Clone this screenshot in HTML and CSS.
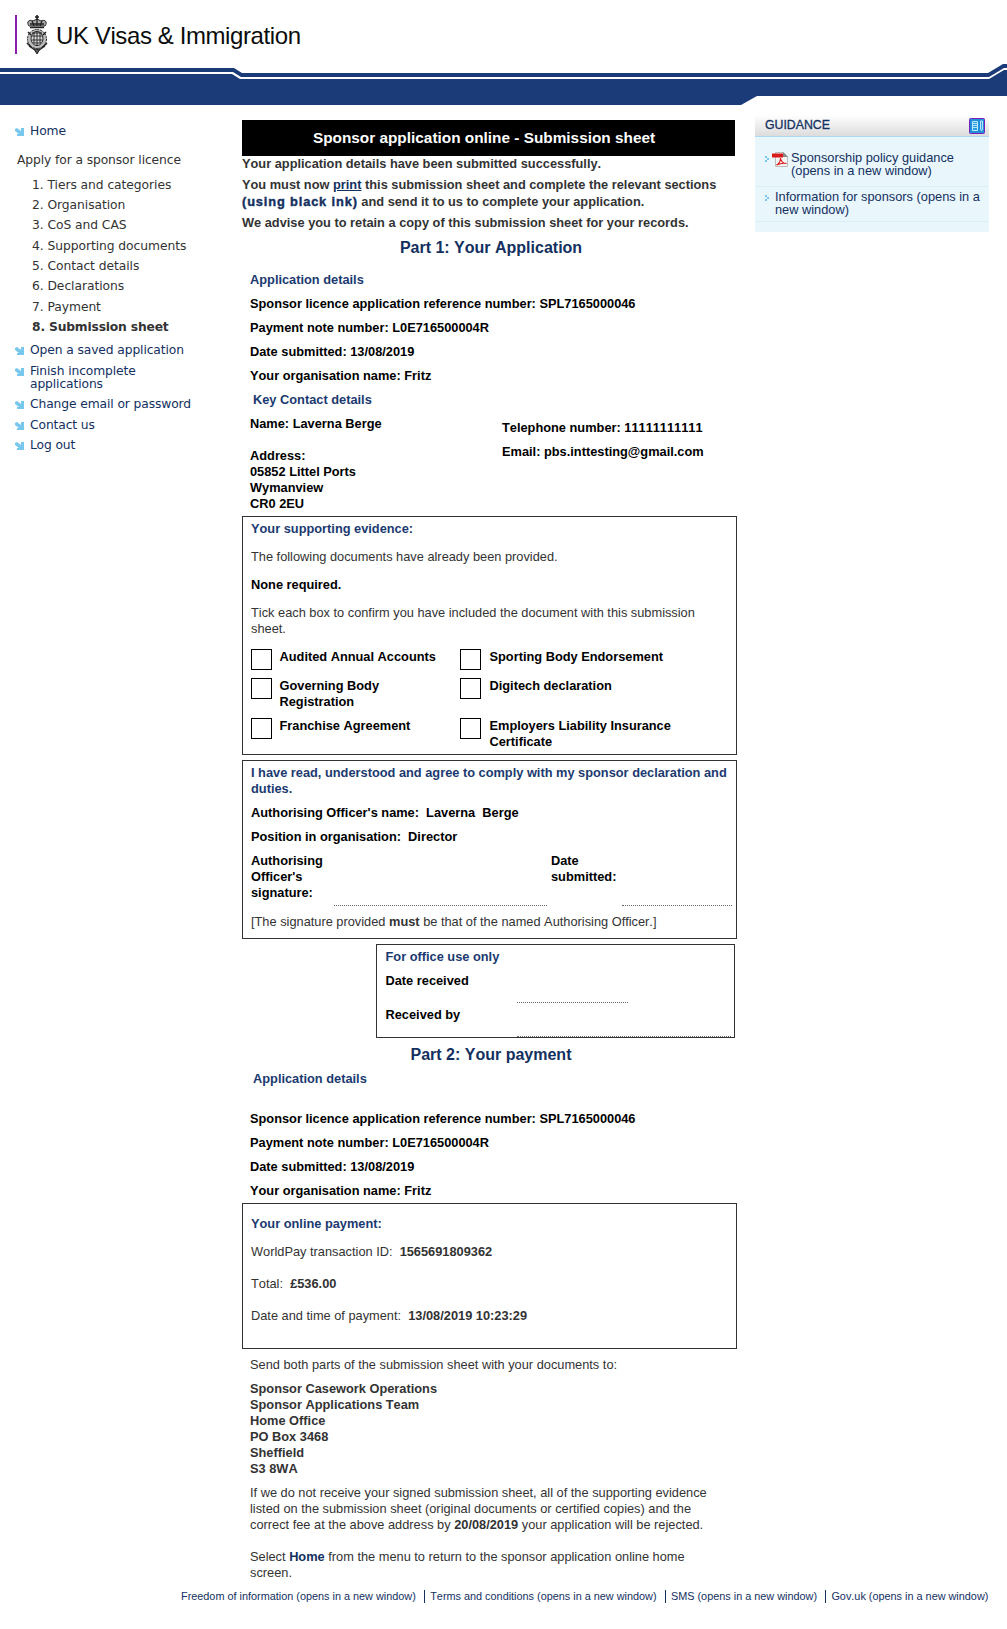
FILE: index.html
```html
<!DOCTYPE html>
<html lang="en">
<head>
<meta charset="utf-8">
<title>Sponsor application online - Submission sheet</title>
<link rel="stylesheet" href="styles.css">
</head>
<body>
<header class="masthead">
  <div class="brand">
    <span class="brand-rule"></span>
    <svg class="crest" width="22" height="40" viewBox="0 0 22 40" aria-hidden="true">
      <g fill="none" stroke="#222" stroke-width="1">
        <path d="M11 0v5M9 2h4" stroke-width="1.6"/>
        <path d="M3 11C0 7 3 4 7 6l4-2 4 2c4-2 7 1 4 5z" fill="#aaa"/>
        <path d="M4 9h14M6 6l2 5M16 6l-2 5M11 4v7M4 12.5h14" stroke-width="1.3"/>
        <ellipse cx="11" cy="24" rx="9.5" ry="9.5" fill="#bbb" stroke-dasharray="2 .8"/>
        <ellipse cx="11" cy="23.500" rx="6" ry="7" fill="#ddd"/>
        <path d="M6 18h10M6 21h10M6 25h10M7 28h8M11 16v15M8 17v11M14 17v11" stroke-width=".9"/>
        <path d="M2 17l3 3M20 17l-3 3M1 28l5 5M21 28l-5 5M3 31l6 4M19 31l-6 4" stroke-width="1.500"/>
        <path d="M8 34l3 5 3-5z" fill="#555"/>
      </g>
    </svg>
    <span class="brand-name">UK Visas &amp; Immigration</span>
  </div>
  <svg class="ribbon" width="1007" height="42" viewBox="0 0 1007 42" aria-hidden="true">
    <path fill="#1b3a78" d="M0 4H234L242 9H988L1003 0H1007V4H1004L989 13H241L233 8H0Z"/>
    <path fill="#1b3a78" d="M0 10H232L240 15H989L1004 6H1007V32H757L741 41H0Z"/>
  </svg>
</header>
<div class="page">
  <nav class="menu">
    <ul class="links"><li><svg class="arrow" viewBox="0 0 9 8"><path d="M0 1L2 0 6 3V0H9V8H2V6H4L0 3Z"/></svg><a>Home</a></li></ul>
    <p class="menu-title">Apply for a sponsor licence</p>
    <ol class="steps">
      <li>1. Tiers and categories</li>
      <li>2. Organisation</li>
      <li>3. CoS and CAS</li>
      <li>4. Supporting documents</li>
      <li>5. Contact details</li>
      <li>6. Declarations</li>
      <li>7. Payment</li>
      <li class="current">8. Submission sheet</li>
    </ol>
    <ul class="links">
      <li><svg class="arrow" viewBox="0 0 9 8"><path d="M0 1L2 0 6 3V0H9V8H2V6H4L0 3Z"/></svg><a>Open a saved application</a></li>
      <li><svg class="arrow" viewBox="0 0 9 8"><path d="M0 1L2 0 6 3V0H9V8H2V6H4L0 3Z"/></svg><a>Finish incomplete<br>applications</a></li>
      <li><svg class="arrow" viewBox="0 0 9 8"><path d="M0 1L2 0 6 3V0H9V8H2V6H4L0 3Z"/></svg><a>Change email or password</a></li>
      <li><svg class="arrow" viewBox="0 0 9 8"><path d="M0 1L2 0 6 3V0H9V8H2V6H4L0 3Z"/></svg><a>Contact us</a></li>
      <li><svg class="arrow" viewBox="0 0 9 8"><path d="M0 1L2 0 6 3V0H9V8H2V6H4L0 3Z"/></svg><a>Log out</a></li>
    </ul>
  </nav>

  <main class="sheet">
    <h1 class="sheet-title">Sponsor application online - Submission sheet</h1>
    <div class="intro">
      <p>Your application details have been submitted successfully.</p>
      <p class="instructions">You must now <a class="print">print</a> this submission sheet and complete the relevant sections<br><span class="ink">(using black ink)</span> and send it to us to complete your application.</p>
      <p>We advise you to retain a copy of this submission sheet for your records.</p>
    </div>
    <h2 class="part">Part 1: Your Application</h2>
    <section class="details">
      <h3 class="details-first">Application details</h3>
      <p>Sponsor licence application reference number: SPL7165000046</p>
      <p>Payment note number: L0E716500004R</p>
      <p>Date submitted: 13/08/2019</p>
      <p>Your organisation name: Fritz</p>
      <h3 class="indent">Key Contact details</h3>
      <div class="contact">
        <div class="contact-person">
          <p>Name: Laverna Berge</p>
          <p class="address">Address:<br>05852 Littel Ports<br>Wymanview<br>CR0 2EU</p>
        </div>
        <div class="contact-reach">
          <p>Telephone number: 11111111111</p>
          <p>Email: pbs.inttesting@gmail.com</p>
        </div>
      </div>
    </section>

    <section class="box evidence">
      <h3>Your supporting evidence:</h3>
      <p>The following documents have already been provided.</p>
      <p class="strong">None required.</p>
      <p>Tick each box to confirm you have included the document with this submission<br>sheet.</p>
      <div class="ticks">
        <span class="tick"></span><span>Audited Annual Accounts</span>
        <span class="tick"></span><span>Sporting Body Endorsement</span>
        <span class="tick"></span><span>Governing Body<br>Registration</span>
        <span class="tick"></span><span>Digitech declaration</span>
        <span class="tick"></span><span>Franchise Agreement</span>
        <span class="tick"></span><span>Employers Liability Insurance<br>Certificate</span>
      </div>
    </section>

    <section class="box declaration">
      <h3>I have read, understood and agree to comply with my sponsor declaration and<br>duties.</h3>
      <p class="strong">Authorising Officer's name:&nbsp; Laverna&nbsp; Berge</p>
      <p class="strong">Position in organisation:&nbsp; Director</p>
      <div class="sign">
        <span>Authorising<br>Officer's<br>signature:</span><span class="dots signature"></span>
        <span>Date<br>submitted:</span><span class="dots"></span>
      </div>
      <p>[The signature provided <b>must</b> be that of the named Authorising Officer.]</p>
    </section>

    <section class="box office">
      <h3>For office use only</h3>
      <div class="office-row"><span>Date received</span><span class="dots short"></span></div>
      <div class="office-row second"><span>Received by</span><span class="dots"></span></div>
    </section>

    <h2 class="part part-two">Part 2: Your payment</h2>
    <section class="details payment-details">
      <h3 class="indent">Application details</h3>
      <p class="spaced">Sponsor licence application reference number: SPL7165000046</p>
      <p>Payment note number: L0E716500004R</p>
      <p>Date submitted: 13/08/2019</p>
      <p>Your organisation name: Fritz</p>
    </section>
    <section class="box payment">
      <h3>Your online payment:</h3>
      <p>WorldPay transaction ID:&nbsp; <b>1565691809362</b></p>
      <p>Total:&nbsp; <b>£536.00</b></p>
      <p>Date and time of payment:&nbsp; <b>13/08/2019 10:23:29</b></p>
    </section>
    <section class="closing">
      <p>Send both parts of the submission sheet with your documents to:</p>
      <p class="postal">Sponsor Casework Operations<br>Sponsor Applications Team<br>Home Office<br>PO Box 3468<br>Sheffield<br>S3 8WA</p>
      <p>If we do not receive your signed submission sheet, all of the supporting evidence<br>listed on the submission sheet (original documents or certified copies) and the<br>correct fee at the above address by <b>20/08/2019</b> your application will be rejected.</p>
      <p class="back">Select <b class="home">Home</b> from the menu to return to the sponsor application online home<br>screen.</p>
    </section>
  </main>

  <aside class="guidance">
    <div class="guidance-head">
      <h2>GUIDANCE</h2>
      <svg width="16" height="16" viewBox="0 0 16 16" aria-hidden="true"><rect x=".5" y=".5" width="15" height="15" rx="1" fill="#1f8fdc" stroke="#7a22b8"/><path d="M3.500 3.500h5v9h-5z" fill="#2a9fe6" stroke="#bfeaff"/><path d="M4 5.500h4M4 7.500h4M4 9.500h4" stroke="#d8f4ff" stroke-width=".8"/><path d="M11.500 3h2v8l-1 2-1-2z" fill="#3aa9e8" stroke="#d8f4ff" stroke-width=".8"/></svg>
    </div>
    <div class="guidance-item pdf">
      <svg class="chev" viewBox="0 0 4 6"><path d="M0 0H2V2H4V4H2V6H0V4H2V2H0Z"/></svg>
      <svg class="pdf-icon" width="16" height="16" viewBox="0 0 16 16" aria-hidden="true"><path d="M3.500 1.500h8l4 4v10h-12z" fill="#f4f4f4" stroke="#bbb"/><path d="M11 1l5 5h-5z" fill="#888"/><path d="M0 2.500h11v4H0z" fill="#d91a1a"/><path d="M4.500 14c3-1.500 4-4.500 4-7 .5 3 2.500 5.500 6 5.500-3-.8-6.500 0-10 1.500z" fill="none" stroke="#d91a1a" stroke-width="1.100"/></svg>
      <a>Sponsorship policy guidance<br>(opens in a new window)</a>
    </div>
    <div class="guidance-item">
      <svg class="chev" viewBox="0 0 4 6"><path d="M0 0H2V2H4V4H2V6H0V4H2V2H0Z"/></svg>
      <a>Information for sponsors (opens in a<br>new window)</a>
    </div>
  </aside>
</div>
<footer class="footer">
  <a>Freedom of information (opens in a new window)</a>
  <a>Terms and conditions (opens in a new window)</a>
  <a>SMS (opens in a new window)</a>
  <a>Gov.uk (opens in a new window)</a>
</footer>
</body>
</html>
```
FILE: styles.css
```css
* { box-sizing: border-box; }
body { margin: 0; height: 1629px; background: #fff; color: #333; font: 12.8px/16px "Liberation Sans", Arial, sans-serif; font-kerning: none; white-space: nowrap; }
h1, h2, h3, p, ul, ol { margin: 0; padding: 0; list-style: none; font-size: inherit; }
svg { flex: none; }

.masthead { height: 105px; }
.brand { display: flex; height: 64px; padding: 15px 0 0 15px; }
.brand-rule { width: 2px; height: 39px; background: #8a1fae; }
.crest { margin: 0 8px 0 9px; }
.brand-name { font-size: 24px; line-height: 41px; color: #0b0c0c; letter-spacing: -0.4px; }
.ribbon { display: block; }

.page { display: flex; height: 1475px; }
.menu { width: 242px; padding-top: 20px; font: 12.3px/13.33px "DejaVu Sans", Verdana, sans-serif; letter-spacing: -0.06px; }
.links { padding-left: 15px; color: #13305f; letter-spacing: -0.11px; }
.links li { display: flex; margin-bottom: 7px; }
.arrow { width: 9px; height: 8px; margin: 3px 6px 0 0; fill: #77c8ec; }
.menu-title { margin: 16px 0 11px 17px; letter-spacing: -0.1px; }
.steps { margin-bottom: 10px; padding-left: 32px; }
.steps li { margin-bottom: 7px; }
.steps .current { font-weight: bold; letter-spacing: -0.18px; }

.sheet { width: 495px; padding-top: 15px; }
.sheet-title { width: 493px; height: 36px; padding-right: 9px; background: #000; color: #fff; font-size: 15.36px; line-height: 36px; text-align: center; }
.intro { font-weight: bold; }
.intro p { margin-bottom: 4px; }
.intro .instructions { margin-bottom: 5px; line-height: 17px; }
.print { color: #13305f; text-decoration: underline; }
.ink { color: #13305f; letter-spacing: .87px; -webkit-text-stroke: .4px #13305f; }
.part { width: 498px; margin-top: 7px; font-size: 16px; line-height: 20px; color: #13305f; text-align: center; }
.details { padding-left: 8px; color: #000; font-weight: bold; }
.details p, .details h3 { margin-bottom: 8px; }
.details h3, .box h3 { color: #1b3a70; }
.details .details-first { margin-top: 14px; }
.indent { padding-left: 3px; }
.contact { display: flex; height: 100px; }
.contact-person { width: 252px; }
.details .address { margin-top: 16px; }
.contact-reach { padding-top: 4px; }

.box { border: 1px solid #333; padding: 4px 8px; }
.evidence { height: 239px; }
.evidence > * { margin-bottom: 12px; }
.strong { color: #000; font-weight: bold; }
.ticks { display: grid; grid-template-columns: 28.5px 180.5px 29.5px 1fr; color: #000; font-weight: bold; row-gap: 8px; }
.tick { width: 21px; height: 21px; border: 1px solid #000; }
.declaration { height: 179px; margin-top: 5px; }
.declaration > * { margin-bottom: 8px; }
.sign { display: grid; grid-template-columns: 83px 217px 71px 110px; height: 53px; color: #000; font-weight: bold; }
.dots { border-bottom: 1px dotted #666; }
.signature { width: 213px; }
.office { width: 359px; height: 94px; margin: 5px 0 0 134px; padding-left: 8.5px; color: #000; font-weight: bold; }
.office h3 { margin-bottom: 8px; }
.office-row { display: grid; grid-template-columns: 131px 214px; height: 30px; }
.short { width: 111px; }
.second { margin-top: 4px; }
.part-two { margin-top: 7px; margin-bottom: 6px; }
.details .spaced { margin-top: 24px; }
.payment-details p:last-child { margin-bottom: 4px; }
.payment { height: 146px; padding-top: 12px; }
.payment h3 { margin-bottom: 12px; }
.payment p { margin-bottom: 16px; }
.closing { padding: 8px 0 0 8px; }
.closing p { margin-bottom: 8px; }
.postal { font-weight: bold; }
.closing .back { margin-top: 16px; }
.home { color: #13305f; }

.guidance { width: 234px; height: 117px; margin: 10px 0 0 18px; background: #e9f6fc; color: #13305f; line-height: 13px; }
.guidance-head { display: flex; justify-content: space-between; height: 22px; padding: 3px 4px 0 10px; background: linear-gradient(#fff, #dcdcdc); border-bottom: 1px solid #a9dcf2; line-height: 14px; }
.guidance-head h2 { font-size: 12.3px; font-weight: normal; -webkit-text-stroke: .3px #13305f; }
.guidance-item { display: flex; height: 35px; padding: 3px 0 0 10px; border-bottom: 1px solid #d9eef5; }
.guidance-item.pdf { height: 50px; padding-top: 14px; }
.chev { width: 4px; height: 6px; margin: 5px 6px 0 0; fill: #77c8ec; }
.pdf .chev { margin-right: 3px; }
.pdf-icon { margin-right: 3px; }

.footer { display: flex; height: 49px; padding: 10px 0 0 181px; color: #13305f; font-size: 10.86px; line-height: 13px; }
.footer a { height: 13px; }
.footer a + a { margin-left: 8.4px; padding-left: 5px; border-left: 1px solid #13305f; }
```
